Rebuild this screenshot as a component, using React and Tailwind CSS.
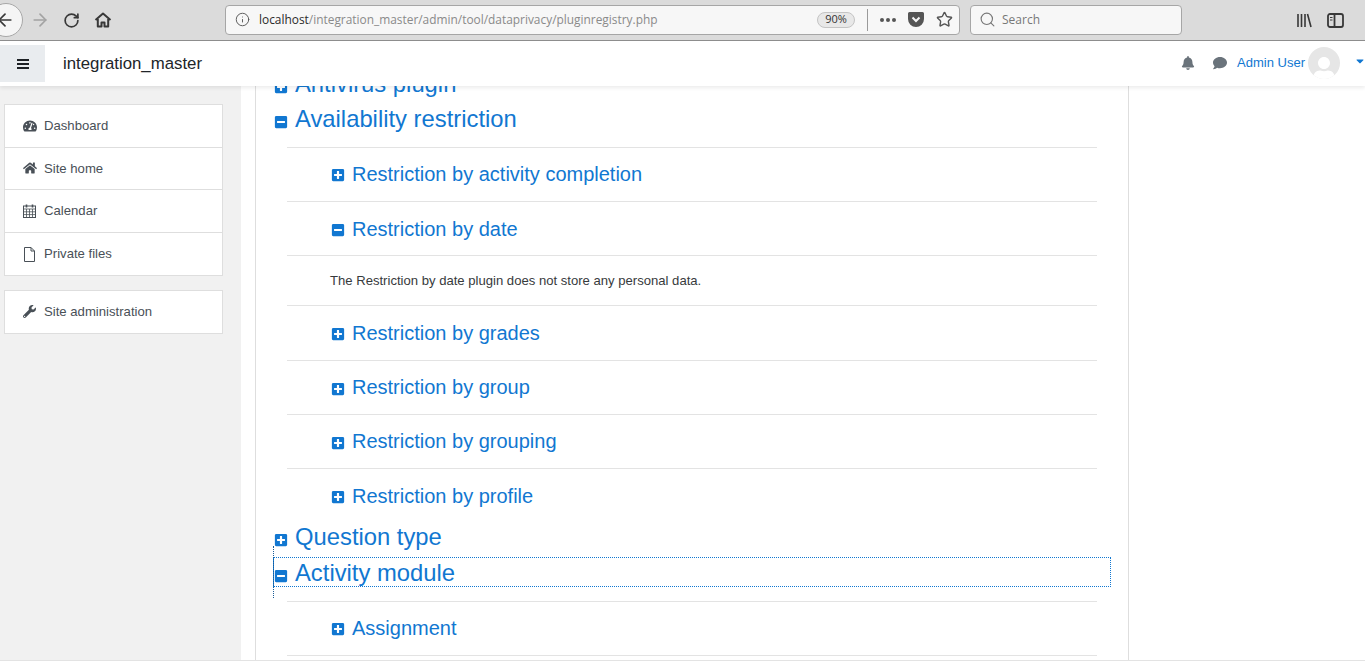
import { FaTachometerAlt, FaHome, FaWrench, FaBell, FaComment, FaPlusSquare, FaMinusSquare, FaCaretDown, FaUser } from 'react-icons/fa';
import { ArrowLeft, ArrowRight, RotateCw, Info, Search, Star } from 'lucide-react';

const CalendarIcon = () => (
  <svg width="13" height="14" viewBox="0 0 13 14" fill="none" stroke="currentColor" strokeWidth="1">
    <rect x="0.5" y="2" width="12" height="11.500" />
    <path d="M0.500 5h12M0.500 7.800h12M0.500 10.600h12M3.500 5v8.500M6.500 5v8.500M9.500 5v8.500" strokeWidth="0.800" />
    <path d="M3.500 0.500v3M9.500 0.500v3" strokeWidth="1.600" />
  </svg>
);

const FileIcon = () => (
  <svg width="13" height="15" viewBox="0 0 13 15" fill="none" stroke="currentColor" strokeWidth="1">
    <path d="M1.500 0.500h6.500l3.500 3.500v10.500h-10zM8 0.500v3.500h3.500" strokeLinejoin="round" />
  </svg>
);

const sideLinks = [
  { label: 'Dashboard', icon: <FaTachometerAlt size={14} /> },
  { label: 'Site home', icon: <FaHome size={14} /> },
  { label: 'Calendar', icon: <CalendarIcon /> },
  { label: 'Private files', icon: <FileIcon /> },
];

// Barra del navegador
const BrowserBar = () => (
  <div className="flex items-center h-[41px] bg-[#dbdbdb] border-b border-[#8f8f8f] shrink-0 text-[#383838]">
    <div className="flex items-center justify-center w-[34px] h-[34px] -ml-[11px] rounded-full bg-[#f5f5f5] border border-[#a8a8a8]">
      <ArrowLeft size={20} strokeWidth={2} className="-ml-[3px]" />
    </div>
    <ArrowRight size={20} strokeWidth={2} className="ml-[7px] text-[#a3a3a3]" />
    <RotateCw size={17} strokeWidth={2.4} className="ml-[13px]" />
    <svg width="18" height="18" viewBox="0 0 18 18" className="ml-[14px]" fill="none" stroke="currentColor" strokeWidth="2">
      <path d="M1.500 9 9 2.500 16.500 9" strokeLinejoin="round" />
      <path d="M3.800 8v7.500h3.700v-4h3v4h3.700V8" strokeLinejoin="round" />
    </svg>
    <div className="flex items-center w-[735px] h-[30px] ml-[113px] -mt-[1px] bg-[#f7f7f7] border border-[#a6a6a6] rounded text-[11.900px] font-['Open_Sans',sans-serif] shrink-0">
      <Info size={15} strokeWidth={1.500} className="ml-[9px] text-[#555]" />
      <span className="ml-[9px] whitespace-nowrap text-[#8a8a8a]">
        <span className="text-[#2b2b2b]">localhost</span>/integration_master/admin/tool/dataprivacy/pluginregistry.php
      </span>
      <span className="ml-auto flex items-center justify-center w-[38px] h-[16px] rounded-full bg-[#e8e8e8] border border-[#c4c4c4] text-[11px] text-[#333]">90%</span>
      <span className="ml-[12px] w-px h-[22px] bg-[#9a9a9a]" />
      <span className="ml-[12px] flex gap-[2px]">
        <span className="w-[4px] h-[4px] rounded-full bg-[#555]" />
        <span className="w-[4px] h-[4px] rounded-full bg-[#555]" />
        <span className="w-[4px] h-[4px] rounded-full bg-[#555]" />
      </span>
      <svg width="16" height="15" viewBox="0 0 16 15" className="ml-[12px]">
        <path d="M1.500 0h13A1.500 1.500 0 0 1 16 1.500V7A8 8 0 0 1 0 7V1.500A1.500 1.500 0 0 1 1.500 0Z" fill="#555" />
        <path d="M4.500 5.500 8 9l3.500-3.500" fill="none" stroke="#f7f7f7" strokeWidth="2" />
      </svg>
      <Star size={17} strokeWidth={2} className="ml-[12px] mr-[6px] text-[#555]" />
    </div>
    <div className="flex items-center w-[212px] h-[30px] ml-[10px] -mt-[1px] bg-[#f7f7f7] border border-[#a6a6a6] rounded text-[12px] text-[#777] font-['Open_Sans',sans-serif] shrink-0">
      <Search size={17} strokeWidth={1.600} className="ml-[8px] text-[#777]" />
      <span className="ml-[6px]">Search</span>
    </div>
    <svg width="15" height="15" viewBox="0 0 15 15" className="ml-[115px]" stroke="#383838" strokeWidth="1.600">
      <path d="M1 1v13M4.500 1v13M8 1v13M10.500 1l3.500 13" fill="none" />
    </svg>
    <svg width="17" height="15" viewBox="0 0 17 15" className="ml-[15px]" fill="none" stroke="#383838" strokeWidth="1.800">
      <rect x="1" y="1" width="15" height="13" rx="2" />
      <path d="M7.500 1v13" />
      <path d="M3 4.500h2.500M3 7h2.500" strokeWidth="1.200" />
    </svg>
  </div>
);

const Navbar = () => (
  <div className="relative z-10 flex items-center h-[45px] bg-white shadow-[0_2px_4px_rgba(0,0,0,0.08)] shrink-0">
    <div className="flex items-center justify-center w-[45px] h-[37px] bg-[#e9ecef] text-[#1d2125]">
      <svg width="12" height="10" viewBox="0 0 12 10" fill="currentColor">
        <rect width="12" height="2" />
        <rect y="4" width="12" height="2" />
        <rect y="8" width="12" height="2" />
      </svg>
    </div>
    <span className="ml-[18px] text-[16.800px] text-[#212529]">integration_master</span>
    <div className="ml-auto flex items-center -mt-[1px]">
      <FaBell size={14} className="text-[#6a737b]" />
      <FaComment size={14} className="ml-[18px] text-[#6a737b]" />
      <span className="ml-[10px] text-[13px] text-[#1177d1]">Admin User</span>
      <div className="flex items-end justify-center w-[32px] h-[32px] ml-[3px] rounded-full bg-[#e6e6e6] overflow-hidden">
        <FaUser size={24} className="text-white -mb-[2px]" />
      </div>
      <FaCaretDown size={12} className="ml-[14px] mr-[-1px] -mt-[4px] text-[#1177d1]" />
    </div>
  </div>
);

const Sidebar = () => (
  <div className="w-[241px] shrink-0 bg-[#f1f1f1] pl-[4px] pt-[18px]">
    <div className="w-[219px] bg-white border border-[#dedede] divide-y divide-[#dedede]">
      {sideLinks.map(({ label, icon }) => (
        <div key={label} className="flex items-center h-[42.600px] pl-[18px] text-[13.150px] text-[#495057]">
          <span className="w-[21px] flex">{icon}</span>
          {label}
        </div>
      ))}
    </div>
    <div className="w-[219px] mt-[14px] bg-white border border-[#dedede]">
      <div className="flex items-center h-[42px] pl-[18px] pb-[1px] text-[13.150px] text-[#495057]">
        <span className="w-[21px] flex"><FaWrench size={13} /></span>
        Site administration
      </div>
    </div>
  </div>
);

// Encabezado de categoria (nivel 1)
const Category = ({ title, open, focus, className = '' }) => {
  const Icon = open ? FaMinusSquare : FaPlusSquare;
  return (
    <div className={`relative flex items-center h-[36px] pl-[18px] w-[837px] text-[23.800px] text-[#1177d1] ${className}`}>
      {focus && <div className="absolute left-[17px] top-[2px] w-[838px] h-[30px] border border-dotted border-[#1177d1]" />}
      {focus && <div className="absolute left-[17px] -top-[9px] h-[52px] border-l border-dotted border-[#1a5c96]" />}
      <Icon size={14} className="mt-[5px] shrink-0" />
      <span className="ml-[7px]">{title}</span>
    </div>
  );
};

// Fila de plugin (nivel 2)
const Plugin = ({ title, open, className = '' }) => {
  const Icon = open ? FaMinusSquare : FaPlusSquare;
  return (
    <div className={`flex items-center h-[54.200px] pl-[44px] border-t border-[#e3e3e3] text-[20px] text-[#1177d1] ${className}`}>
      <Icon size={14} className="mt-[3px] shrink-0" />
      <span className="ml-[7px]">{title}</span>
    </div>
  );
};

export default function App() {
  return (
    <div className="flex flex-col h-[661px] overflow-hidden bg-white border-b border-[#e3e3e3] font-['Liberation_Sans',Arial,sans-serif]">
      <BrowserBar />
      <Navbar />
      <div className="flex flex-1 min-h-0">
        <Sidebar />
        <div className="w-[874px] ml-[14px] shrink-0 overflow-hidden border-x border-[#dedede]">
          <div className="-mt-[20px]">
            <Category title="Antivirus plugin" />
            <Category title="Availability restriction" open className="-mt-[1px]" />
            <div className="ml-[31px] w-[810px]">
              <div className="h-[10px]" />
              <Plugin title="Restriction by activity completion" className="pb-[2px]" />
              <Plugin title="Restriction by date" open />
              <div className="flex items-center h-[50px] pl-[43px] border-t border-[#e3e3e3] text-[13.100px] text-[#373a3c]">
                The Restriction by date plugin does not store any personal data.
              </div>
              <Plugin title="Restriction by grades" />
              <Plugin title="Restriction by group" />
              <Plugin title="Restriction by grouping" />
              <Plugin title="Restriction by profile" />
            </div>
            <Category title="Question type" className="-mt-[3px]" />
            <Category title="Activity module" open focus />
            <div className="ml-[31px] w-[810px]">
              <div className="h-[10px]" />
              <Plugin title="Assignment" className="pb-[2px]" />
              <div className="border-t border-[#e3e3e3]" />
            </div>
          </div>
        </div>
      </div>
    </div>
  );
}
